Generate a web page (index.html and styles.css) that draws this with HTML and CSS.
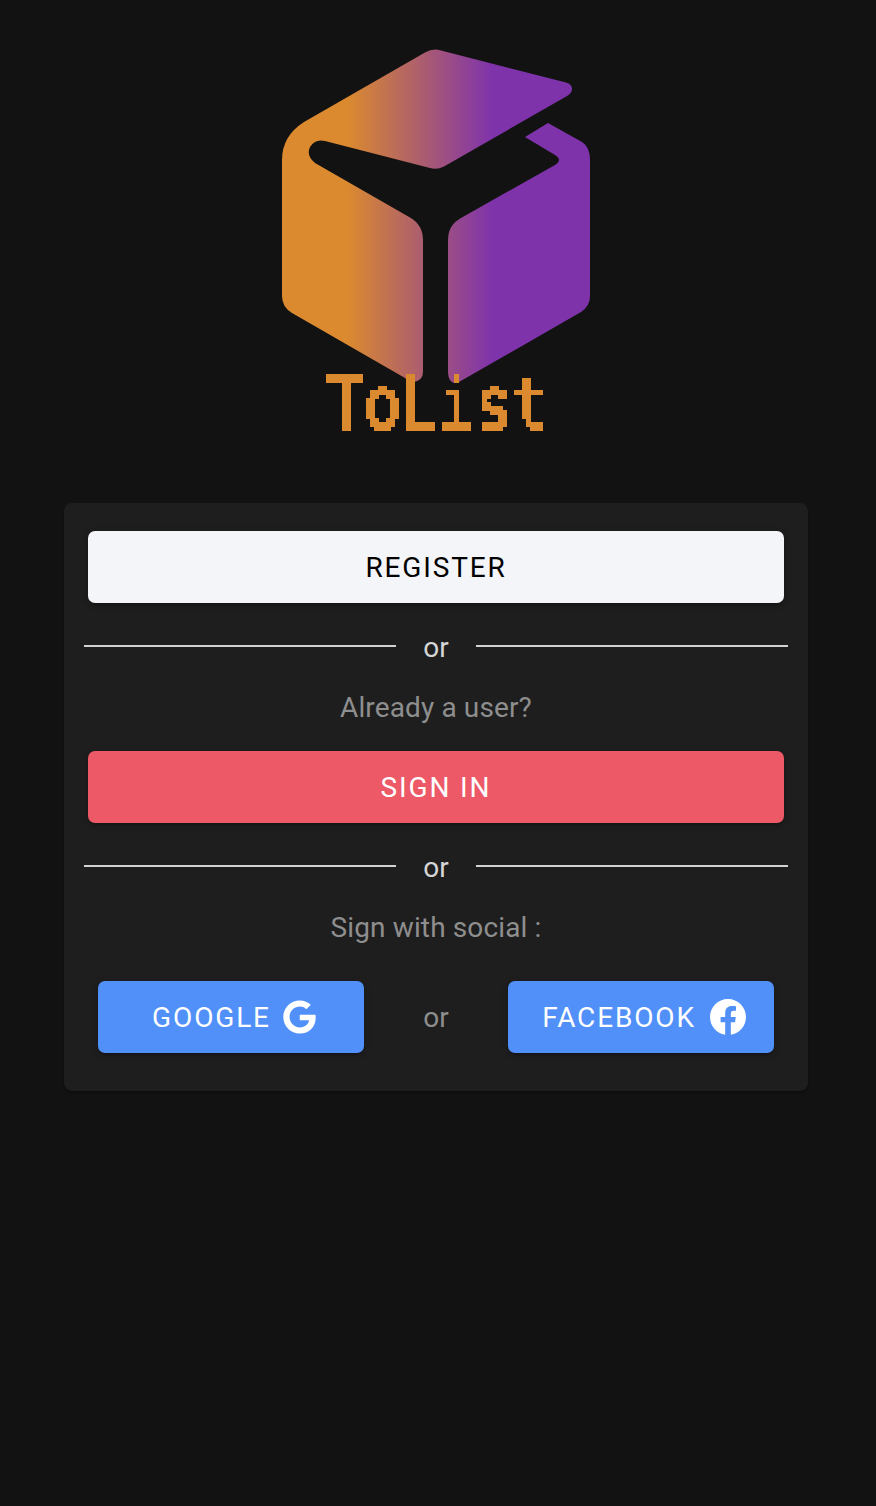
FILE: index.html
```html
<!DOCTYPE html>
<html lang="en">
<head>
<meta charset="utf-8">
<title>ToList</title>
<link rel="stylesheet" href="styles.css">
</head>
<body>
<main class="page">
  <svg class="logo" viewBox="276 44 320 396" width="320" height="396" role="img" aria-label="ToList logo">
    <defs>
      <linearGradient id="cube" gradientUnits="userSpaceOnUse" x1="347" y1="0" x2="492" y2="0">
        <stop offset="0" stop-color="#db8a2f"/>
        <stop offset="1" stop-color="#7f33ab"/>
      </linearGradient>
      <filter id="pixel" filterUnits="userSpaceOnUse" x="320" y="370" width="235" height="65" color-interpolation-filters="sRGB">
        <feFlood x="324" y="376" width="1" height="1" flood-color="#000"/>
        <feComposite width="4" height="4"/>
        <feTile result="grid"/>
        <feComposite in="SourceGraphic" in2="grid" operator="in"/>
        <feComponentTransfer>
          <feFuncA type="discrete" tableValues="0 1"/>
        </feComponentTransfer>
        <feMorphology operator="dilate" radius="2"/>
        <feGaussianBlur stdDeviation="0.6"/>
      </filter>
    </defs>
    <path class="cube-face" d="M425 52.5Q433 48 441 50.5L566 82.5Q572 84 572 89Q572 93 567 96L444 166.5Q437 170 430 168L325 141Q315 138.500 310 147Q306 156 315 163L410 217.500Q423 225 423 240V372Q423 380 414 382Q410 382 405 378L292 313Q282 307 282 296V160Q282 136 304 122Z"/>
    <path class="cube-face" d="M548 123L582 142Q590 147 590 160V296Q590 306 581 312L459 382Q449 386 448 373V240Q448 225 461 218L555 165Q563 160 555 155L525 137Z"/>
    <text class="wordmark" x="327" y="429" textLength="222" lengthAdjust="spacingAndGlyphs" filter="url(#pixel)">ToList</text>
  </svg>

  <section class="card">
    <button class="btn btn-light" type="button">Register</button>
    <div class="divider"><span class="divider-line"></span><span class="divider-text">or</span><span class="divider-line"></span></div>
    <p class="hint">Already a user?</p>
    <button class="btn btn-red" type="button">Sign in</button>
    <div class="divider"><span class="divider-line"></span><span class="divider-text">or</span><span class="divider-line"></span></div>
    <p class="hint hint-social">Sign with social :</p>
    <div class="social">
      <button class="btn btn-blue" type="button">Google
        <svg class="icon" viewBox="0 0 488 512" aria-hidden="true"><path d="M488 261.8C488 403.3 391.1 504 248 504 110.8 504 0 393.2 0 256S110.800 8 248 8c66.800 0 123 24.500 166.300 64.900l-67.500 64.900C258.500 52.600 94.300 116.600 94.300 256c0 86.500 69.100 156.600 153.700 156.600 98.200 0 135-70.400 140.800-106.900H248v-85.300h236.100c2.300 12.700 3.900 24.900 3.900 41.400z"/></svg>
      </button>
      <span class="social-or">or</span>
      <button class="btn btn-blue" type="button">Facebook
        <svg class="icon icon-fb" viewBox="8 8 496 496" aria-hidden="true"><path d="M504 256C504 119 393 8 256 8S8 119 8 256c0 123.780 90.690 226.380 209.250 245V327.690h-63V256h63v-54.640c0-62.150 37-96.480 93.670-96.480 27.140 0 55.520 4.840 55.520 4.840v61h-31.280c-30.800 0-40.410 19.120-40.410 38.730V256h68.780l-11 71.690h-57.780V501C413.310 482.380 504 379.780 504 256z"/></svg>
      </button>
    </div>
  </section>
</main>
</body>
</html>
```

FILE: styles.css
```css
* {
  box-sizing: border-box;
}

html,
body {
  margin: 0;
  min-height: 100%;
  background: #121212;
}

body {
  font-family: Roboto, "Liberation Sans", sans-serif;
}

.page {
  display: flex;
  flex-direction: column;
  align-items: center;
  min-height: 1506px;
  padding: 44px 4px 0 0;
}

.logo {
  display: block;
  flex: none;
}

.cube-face {
  fill: url(#cube);
}

.wordmark {
  font-family: "DejaVu Sans Mono", monospace;
  font-size: 72px;
  fill: #db8a2f;
  stroke: #db8a2f;
  stroke-width: 1.5px;
}

.card {
  width: 744px;
  margin-top: 63px;
  padding: 28px 20px 38px;
  background: #1e1e1e;
  border-radius: 8px;
  box-shadow: 0 2px 2px rgba(0, 0, 0, 0.25);
}

.btn {
  display: flex;
  align-items: center;
  justify-content: center;
  gap: 12px;
  height: 72px;
  border: 0;
  border-radius: 7px;
  font-family: inherit;
  font-size: 28px;
  font-weight: 400;
  letter-spacing: 1.85px;
  text-transform: uppercase;
  box-shadow: 0 3px 2px -2px rgba(0, 0, 0, 0.2), 0 2px 4px rgba(0, 0, 0, 0.14), 0 1px 8px rgba(0, 0, 0, 0.12);
}

.btn-light,
.btn-red {
  width: 696px;
  margin: 0 4px;
}

.btn-light {
  background: #f4f5f9;
  color: #000;
}

.btn-red {
  background: #ed5967;
  color: #fff;
}

.btn-blue {
  width: 266px;
  padding: 0 0 0 6px;
  background: #5190f8;
  color: #fff;
}

.divider {
  display: flex;
  align-items: center;
  height: 40px;
  margin: 25px 0 20px;
}

.divider-line {
  flex: 1;
  height: 2px;
  margin-top: -4px;
  background: #d2d2d2;
}

.divider-text {
  width: 80px;
  color: #d6d6d6;
  font-size: 28px;
  line-height: 40px;
  text-align: center;
}

.hint {
  margin: 0 0 23px;
  color: #8e8e8e;
  font-size: 28px;
  line-height: 40px;
  letter-spacing: 0.13px;
  text-align: center;
}

.hint-social {
  margin-bottom: 33px;
}

.social {
  display: flex;
  align-items: center;
  justify-content: space-between;
  padding: 0 14px;
}

.social-or {
  color: #8e8e8e;
  font-size: 28px;
}

.icon {
  flex: none;
  width: 33px;
  height: 34px;
  fill: #fff;
}

.icon-fb {
  width: 36px;
  height: 36px;
  margin-left: 2px;
}
```
